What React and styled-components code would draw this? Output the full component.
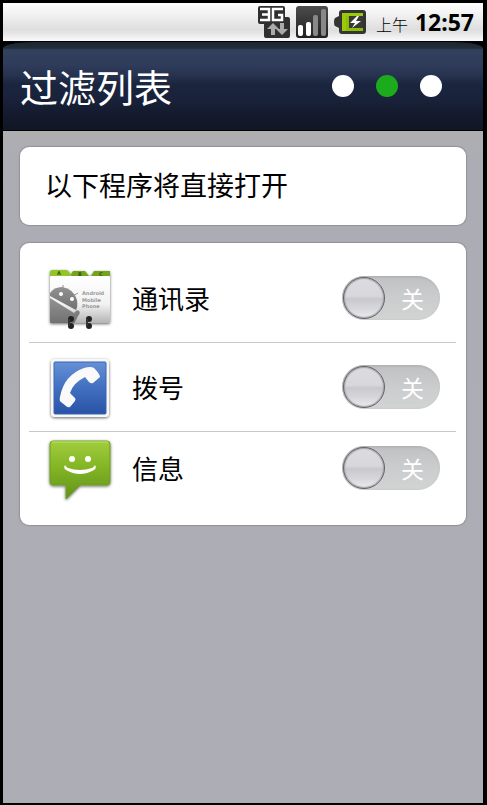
import React, { useState } from "react";
import styled, { createGlobalStyle } from "styled-components";

const GlobalStyle = createGlobalStyle`
  * { box-sizing: border-box; }
  body { margin: 0; background: #000; }
`;

const Screen = styled.div`
  display: flex;
  flex-direction: column;
  min-height: 100vh;
  padding: 3px 4px 2px 3px;
  background: #000;
  color: #000;
  font-family: "Noto Sans", "Noto Sans CJK SC", sans-serif;
`;

const StatusBar = styled.div`
  display: flex;
  align-items: center;
  justify-content: flex-end;
  height: 38px;
  padding: 0 9px 0 0;
  background: linear-gradient(#fff 0%, #f4f4f4 25%, #dedede 70%, #e6e6e6 80%, #fafafa 100%);
`;

const StatusIcons = styled.div`
  display: flex;
  align-items: center;
  gap: 6px;
  margin-right: 10px;

  svg { display: block; }
`;

const Clock = styled.time`
  display: flex;
  align-items: baseline;
  gap: 7px;
  padding-top: 2px;
  font-size: 23px;
  line-height: 32px;
  font-weight: 700;
`;

const Period = styled.span`
  font-family: "Noto Sans CJK SC", sans-serif;
  font-size: 16px;
  font-weight: 300;
`;

const Header = styled.header`
  display: flex;
  align-items: center;
  justify-content: space-between;
  height: 90px;
  padding: 0 41px 0 17px;
  border-top: 1px solid #000;
  border-bottom: 1px solid #000;
  border-radius: 30px 30px 0 0 / 7px 7px 0 0;
  background: linear-gradient(#1c252f 0, #222d3a 6px, #32415c 8px, #2f3c5b 22px, #26324e 34px, #1a253f 42px, #19223a 58px, #141b2d 72px, #101624 88px);
`;

const Title = styled.h1`
  margin: 0;
  color: #fff;
  font-family: "Noto Sans CJK SC", sans-serif;
  font-size: 38px;
  line-height: 56px;
  font-weight: 400;
`;

const Pager = styled.nav`
  display: flex;
  gap: 22px;
`;

const Dot = styled.button`
  width: 22px;
  height: 22px;
  padding: 0;
  border: 0;
  border-radius: 50%;
  background: ${({ $active }) => ($active ? "#1cab1c" : "#fff")};
`;

const Content = styled.main`
  display: flex;
  flex: 1;
  flex-direction: column;
  gap: 18px;
  padding: 16px 17px;
  background: linear-gradient(#aeaeb1 0, #acacb4 30px, #adadb5 100%);
`;

const Card = styled.section`
  border-radius: 9px;
  background: #fff;
  box-shadow: 0 0 1px 1px #929296;
`;

const Notice = styled(Card)`
  display: flex;
  align-items: center;
  height: 78px;
  padding: 0 25px 2px;
`;

const Text = styled.p`
  margin: 0;
  font-family: "Noto Sans CJK SC", sans-serif;
  font-size: 27px;
  line-height: 40px;
`;

const AppList = styled(Card)`
  padding: 11px 10px 21px 9px;
`;

const Row = styled.label`
  display: flex;
  align-items: center;
  height: ${({ $last }) => ($last ? "72px" : "89px")};
  padding: 0 16px 0 19px;
  border-bottom: ${({ $last }) => ($last ? "0" : "1px solid #c8c8c8")};
`;

const RowIcon = styled.span`
  display: flex;
  width: 64px;
  margin-right: 20px;

  svg { display: block; overflow: visible; }
`;

const AppName = styled.span`
  flex: 1;
  font-family: "Noto Sans CJK SC", sans-serif;
  font-size: 26px;
  line-height: 40px;
`;

const Track = styled.span`
  position: relative;
  display: flex;
  flex-direction: ${({ $on }) => ($on ? "row-reverse" : "row")};
  align-items: center;
  justify-content: space-between;
  width: 98px;
  height: 44px;
  padding: ${({ $on }) => ($on ? "0 1px 0 16px" : "0 16px 0 1px")};
  border-radius: 22px;
  background: ${({ $on }) => ($on ? "#1cab1c" : "linear-gradient(#c0c1c2, #cbcccd 50%, #d2d3d3)")};
  box-shadow: inset 1px 1px 3px #aaabad;
`;

const Knob = styled.span`
  width: 42px;
  height: 42px;
  border: 1px solid #626266;
  border-radius: 50%;
  background: linear-gradient(#dcdce0 0%, #d8d8dc 45%, #c8c8ce 52%, #d6d6da 75%, #ececef 100%);
  box-shadow: inset 0 0 1px 1px #a5a5aa;
`;

const StateText = styled.span`
  color: #fff;
  font-family: "Noto Sans CJK SC", sans-serif;
  font-size: 23px;
  line-height: 32px;
  font-weight: 400;
`;

const Checkbox = styled.input`
  position: absolute;
  inset: 0;
  width: 100%;
  height: 100%;
  margin: 0;
  opacity: 0;
`;

const NetworkIcon = () => (
  <svg width="32" height="32" viewBox="0 0 32 32" aria-hidden="true">
    <path d="M2 0H25Q27 0 27 2V11H30Q32 11 32 13V30Q32 32 30 32H8Q6 32 6 30V18H2Q0 18 0 16V2Q0 0 2 0Z" fill="#303030" />
    <path d="M2 3H11V14H2M4 8.5H11M25 3H15V14H24V9H20" fill="none" stroke="#fff" strokeWidth="2.5" />
    <path d="M15 17L21 23H17V29H13V23H9Z" fill="#aaa" />
    <path d="M22 17H26V23H30L24 29L18 23H22Z" fill="#aaa" />
  </svg>
);

const SignalIcon = () => (
  <svg width="32" height="32" viewBox="0 0 32 32" aria-hidden="true">
    <defs>
      <linearGradient id="signal" x2="0" y2="1">
        <stop stopColor="#4c4c4c" />
        <stop offset="1" stopColor="#202020" />
      </linearGradient>
    </defs>
    <rect width="32" height="32" rx="3" fill="url(#signal)" />
    <rect x="2" y="19" width="5" height="11" rx="2" fill="#fff" />
    <rect x="10" y="16" width="5" height="14" rx="2" fill="#fff" />
    <rect x="17" y="9" width="5" height="21" rx="2" fill="#888" />
    <rect x="25" y="3" width="5" height="27" rx="2" fill="#888" />
  </svg>
);

const BatteryIcon = () => (
  <svg width="32" height="24" viewBox="0 0 32 24" aria-hidden="true">
    <path d="M8 0H29Q32 0 32 3V21Q32 24 29 24H8Q5 24 5 21V18L1 16Q0 15 0 12Q0 9 1 8L5 6V3Q5 0 8 0Z" fill="#343434" />
    <path d="M8 3H29V6H15V18H29V21H8Z" fill="#8ebd08" />
    <path d="M8 3H29V6H12V21H8Z" fill="#a4d20d" opacity=".6" />
    <rect x="15" y="6" width="14" height="12" fill="#3a3a35" />
    <path d="M23 6L16 13H21L18 18L27 11H22L25 6Z" fill="#fff" />
  </svg>
);

const ContactsIcon = () => (
  <svg width="64" height="64" viewBox="0 0 64 64" aria-hidden="true">
    <defs>
      <linearGradient id="cardFace" x2="0" y2="1">
        <stop stopColor="#fff" />
        <stop offset=".6" stopColor="#f2f2f2" />
        <stop offset="1" stopColor="#b4b4b4" />
      </linearGradient>
      <linearGradient id="robot" x2="0" y2="1">
        <stop stopColor="#929292" />
        <stop offset="1" stopColor="#707070" />
      </linearGradient>
      <clipPath id="cardClip"><rect x="2" y="10" width="60" height="47" rx="1" /></clipPath>
      <filter id="softShadow" x="-20%" y="-20%" width="140%" height="150%">
        <feDropShadow dx="0" dy="1" stdDeviation="1.7" floodColor="#000" floodOpacity=".6" />
      </filter>
    </defs>
    <g filter="url(#softShadow)">
      <path d="M22 10L25 5H37L41 10ZM43 10L46 5H62V11H43Z" fill="#72a51d" />
      <path d="M2 11V6Q2 4 4 4H18Q20 4 21 6L24 10H62V12H2Z" fill="#91c52c" />
      <rect x="2" y="10" width="60" height="47" rx="1" fill="url(#cardFace)" />
    </g>
    <g clipPath="url(#cardClip)">
      <path d="M2 27Q6 21 14 21Q26 23 29 34Q30 40 28 44L2 30Z" fill="url(#robot)" />
      <path d="M2 32L26 47Q29 43 31 45Q33 47 30 50L26 58H2Z" fill="url(#robot)" />
      <path d="M15 19V23M30 27L25 30" stroke="#929292" />
      <circle cx="13" cy="28" r="2" fill="#fff" />
      <circle cx="24" cy="33" r="2" fill="#fff" />
    </g>
    <g fontFamily="DejaVu Sans" fontSize="5" fontWeight="700" fill="#999">
      <text x="34" y="29">Android</text>
      <text x="34" y="36">Mobile</text>
      <text x="34" y="42">Phone</text>
    </g>
    <g fontFamily="DejaVu Sans" fontSize="5" fontWeight="700" fill="#37520c">
      <text x="9" y="9">A</text>
      <text x="30" y="10">B</text>
      <text x="51" y="10">C</text>
    </g>
    <g fill="#222">
      <circle cx="23" cy="53" r="3" />
      <circle cx="23" cy="60" r="3" />
      <circle cx="41" cy="53" r="3" />
      <circle cx="41" cy="60" r="3" />
    </g>
    <path d="M21 53V60M39 53V60" stroke="#333" strokeWidth="2" />
  </svg>
);

const PhoneIcon = () => (
  <svg width="64" height="64" viewBox="0 0 64 64" aria-hidden="true">
    <defs>
      <linearGradient id="phoneBlue" x2="0" y2="1">
        <stop stopColor="#6690d6" />
        <stop offset=".5" stopColor="#426fc0" />
        <stop offset="1" stopColor="#2953a6" />
      </linearGradient>
    </defs>
    <g filter="url(#softShadow)">
      <rect x="3" y="4" width="58" height="58" rx="4" fill="#f8f8f8" />
    </g>
    <rect x="6" y="7" width="52" height="52" rx="1" fill="url(#phoneBlue)" stroke="#3965b5" />
    <path d="M13 47Q11 46 12 42Q16 20 36 13Q43 11 46 13Q52 19 52 22L45 28Q43 29 41 27L37 22Q25 28 22 38L27 43Q28 44 27 46L22 52Q20 53 18 51Z" fill="#fafafa" />
  </svg>
);

const MessageIcon = () => (
  <svg width="64" height="64" viewBox="0 0 64 64" aria-hidden="true">
    <defs>
      <linearGradient id="bubble" x2="0" y2="1">
        <stop stopColor="#a1cd3d" />
        <stop offset=".45" stopColor="#83b525" />
        <stop offset="1" stopColor="#62921b" />
      </linearGradient>
    </defs>
    <g filter="url(#softShadow)">
      <path d="M5 5H59Q62 5 62 8V46Q62 49 59 49H32L18 63V49H5Q2 49 2 46V8Q2 5 5 5Z" fill="url(#bubble)" stroke="#6f9d22" />
    </g>
    <path d="M4 6H60" stroke="#bee36c" />
    <circle cx="24" cy="23" r="3" fill="#fff" />
    <circle cx="40" cy="23" r="3" fill="#fff" />
    <path d="M17 29Q18 31 20 32Q32 36 44 32Q46 31 47 29Q49 32 46 34Q32 42 18 34Q15 32 17 29Z" fill="#fff" />
  </svg>
);

const apps = [
  { id: "contacts", name: "通讯录", Icon: ContactsIcon },
  { id: "dialer", name: "拨号", Icon: PhoneIcon },
  { id: "messages", name: "信息", Icon: MessageIcon },
];

function AppRow({ app, last }) {
  const [on, setOn] = useState(false);
  const { Icon, id, name } = app;
  return (
    <Row htmlFor={id} $last={last}>
      <RowIcon><Icon /></RowIcon>
      <AppName>{name}</AppName>
      <Track $on={on}>
        <Knob />
        <StateText>{on ? "开" : "关"}</StateText>
        <Checkbox
          id={id}
          type="checkbox"
          role="switch"
          aria-label={name}
          checked={on}
          onChange={(e) => setOn(e.target.checked)}
        />
      </Track>
    </Row>
  );
}

export default function App() {
  const [page, setPage] = useState(1);
  return (
    <>
      <GlobalStyle />
      <Screen>
        <StatusBar>
          <StatusIcons>
            <NetworkIcon />
            <SignalIcon />
            <BatteryIcon />
          </StatusIcons>
          <Clock>
            <Period>上午</Period>
            12:57
          </Clock>
        </StatusBar>
        <Header>
          <Title>过滤列表</Title>
          <Pager>
            {[0, 1, 2].map((i) => (
              <Dot
                key={i}
                type="button"
                aria-label={`${i + 1}`}
                $active={i === page}
                onClick={() => setPage(i)}
              />
            ))}
          </Pager>
        </Header>
        <Content>
          <Notice>
            <Text>以下程序将直接打开</Text>
          </Notice>
          <AppList>
            {apps.map((app, i) => (
              <AppRow key={app.id} app={app} last={i === apps.length - 1} />
            ))}
          </AppList>
        </Content>
      </Screen>
    </>
  );
}
